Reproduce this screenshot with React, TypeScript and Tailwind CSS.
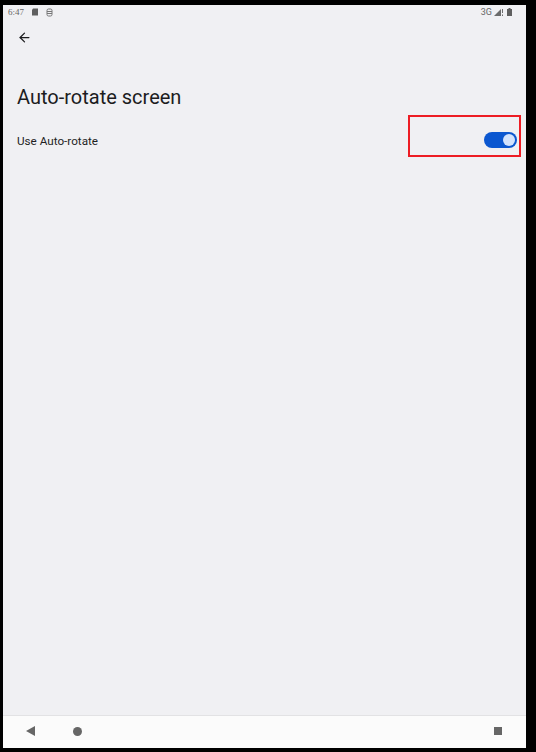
import { ArrowLeft } from "lucide-react";

function StatusBar() {
    return (
        <div className="flex h-[14px] items-center justify-between pl-[5px] pr-[14px] text-[#666]">
            <div className="flex items-center">
                <span className="font-['Liberation_Serif',serif] text-[9px] leading-none">6:47</span>
                <svg className="ml-[7px]" width="8" height="8" viewBox="0 0 8 8">
                    <path d="M2 0.5H7V7.5H1V2Z" fill="#5f5f5f" />
                </svg>
                <svg className="ml-[7px]" width="7" height="9" viewBox="0 0 7 9" fill="none" stroke="#777" strokeWidth="1">
                    <rect x="1" y="1" width="5" height="7" rx="1.5" />
                    <path d="M1 3.5H6M1 5.5H6" />
                </svg>
            </div>
            <div className="flex items-center">
                <span className="font-['Roboto',sans-serif] text-[9px] leading-none">3G</span>
                <svg className="ml-[2px]" width="7" height="7" viewBox="0 0 7 7">
                    <path d="M0 7L7 0V7Z" fill="#6b6b6b" />
                </svg>
                <svg className="ml-[1px]" width="1" height="7" viewBox="0 0 1 7">
                    <path d="M0 0H1V4H0ZM0 5.5H1V7H0Z" fill="#6b6b6b" />
                </svg>
                <svg className="ml-[4px]" width="5" height="8" viewBox="0 0 5 8">
                    <path d="M1.5 0H3.5V1H5V8H0V1H1.5Z" fill="#5f5f5f" />
                </svg>
            </div>
        </div>
    );
}

function Toggle() {
    return (
        <div className="flex h-[16px] w-[33px] items-center justify-end rounded-full bg-[#0b57d0] pr-[2px]">
            <div className="h-[12px] w-[12px] rounded-full bg-[#d3e3fd]" />
        </div>
    );
}

function NavBar() {
    return (
        <div className="flex h-[33px] items-center border-t border-[#e2e2e4] bg-[#fbfbfb] pb-[2px] pl-[23px] pr-[24px]">
            <svg width="9" height="10" viewBox="0 0 9 10">
                <path d="M0 5L9 0V10Z" fill="#666" />
            </svg>
            <div className="ml-[38px] h-[9px] w-[9px] rounded-full bg-[#666]" />
            <div className="ml-auto h-[8px] w-[8px] bg-[#666]" />
        </div>
    );
}

export default function App() {
    return (
        <div className="h-[752px] w-[536px] overflow-hidden bg-black">
            <div className="h-[5px]" />
            <div className="flex h-[743px] w-[526px] pl-[3px]">
                <div className="flex min-w-0 flex-1 flex-col bg-[#f0f0f3] font-['Roboto',sans-serif]">
                    <StatusBar />
                    <div className="pl-[14px] pt-[11px]">
                        <ArrowLeft size={15} strokeWidth={2} className="text-[#1c1c1e]" />
                    </div>
                    <h1 className="pl-[14px] pt-[40px] text-[20px] leading-[24px] text-[#1c1c1e]">Auto-rotate screen</h1>
                    <div className="flex h-[16px] items-center justify-between pl-[14px] pr-[9px] mt-[23px]">
                        <span className="pt-[2px] text-[11.7px] leading-[16px] text-[#1f1f1f]">Use Auto-rotate</span>
                        <Toggle />
                    </div>
                    <div className="flex-1" />
                    <NavBar />
                </div>
            </div>
            <div className="absolute left-[408px] top-[115px] h-[42px] w-[113px] border-2 border-[#ed1c24]" />
        </div>
    );
}
